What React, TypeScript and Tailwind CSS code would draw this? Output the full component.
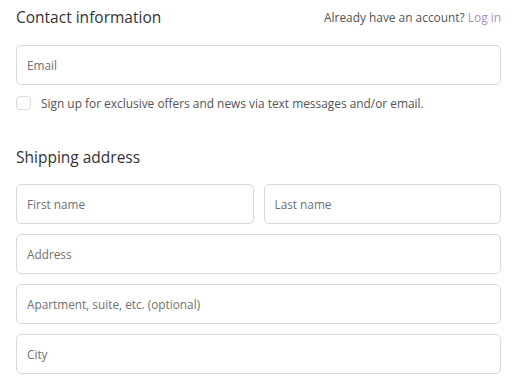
function Field({ placeholder }: { placeholder: string }) {
  return (
    <input
      type="text"
      placeholder={placeholder}
      className="h-10 w-full rounded-[5px] border border-[#d9d9d9] bg-white px-[10px] text-[11.8px] text-[#333] placeholder:text-[#707070] outline-none"
    />
  );
}

export default function App() {
  return (
    <div
      className="w-[512px] h-[382px] overflow-hidden bg-white pl-4 pr-[11px] pt-[6px]"
      style={{ fontFamily: '"Open Sans", sans-serif' }}
    >
      <div className="flex items-center justify-between">
        <h2 className="text-[15.5px] leading-[22px] text-[#333]">Contact information</h2>
        <p className="text-[11.9px] leading-[22px] text-[#545454]">
          Already have an account? <a className="text-[#a78fc4]">Log in</a>
        </p>
      </div>

      <div className="mt-[17px]">
        <Field placeholder="Email" />
      </div>

      <label className="mt-[9px] flex items-center gap-[10px] text-[11.9px] leading-[18px] text-[#545454]">
        <span className="h-[14px] w-[15px] rounded-[4px] border border-[#d9d9d9] bg-white" />
        Sign up for exclusive offers and news via text messages and/or email.
      </label>

      <h2 className="mt-[34px] text-[15.5px] leading-[22px] text-[#333]">Shipping address</h2>

      <div className="mt-[16px] flex flex-col gap-[10px]">
        <div className="grid grid-cols-2 gap-[10px]">
          <Field placeholder="First name" />
          <Field placeholder="Last name" />
        </div>
        <Field placeholder="Address" />
        <Field placeholder="Apartment, suite, etc. (optional)" />
        <Field placeholder="City" />
      </div>
    </div>
  );
}
